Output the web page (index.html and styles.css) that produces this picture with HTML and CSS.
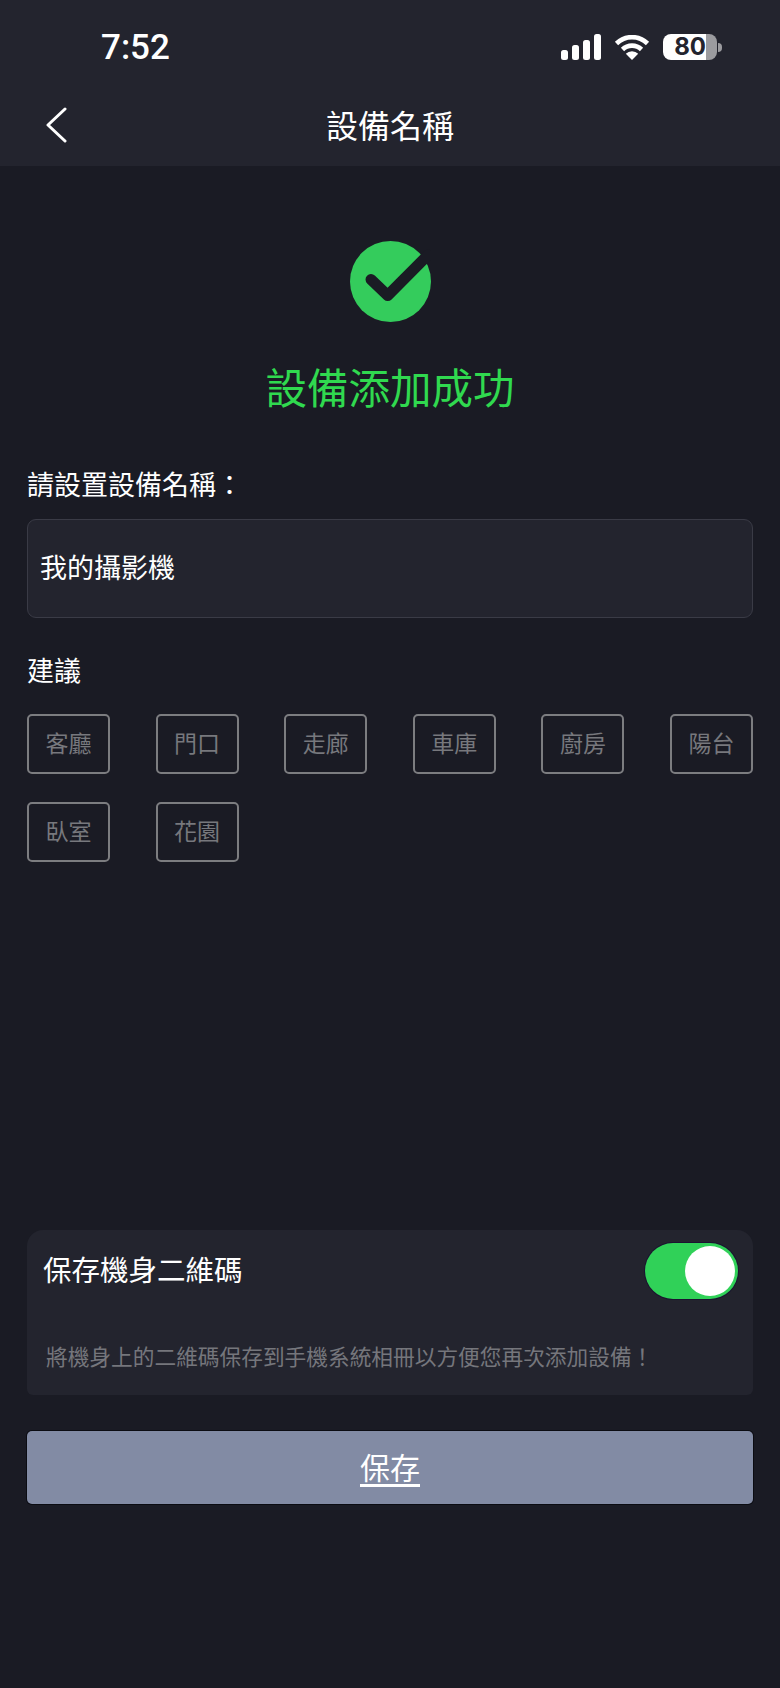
FILE: index.html
```html
<!DOCTYPE html>
<html>
<head>
    <meta charset="utf-8">
    <title>設備名稱</title>
    <link rel="stylesheet" href="styles.css">
</head>
<body>
<div class="page">
    <header class="top">
        <div class="status">
            <span class="time">7:52</span>
            <div class="status-icons">
                <svg class="signal" width="40" height="26" viewBox="0 0 40 26">
                    <rect x="0" y="16" width="7" height="10" rx="2.5"/>
                    <rect x="11" y="11" width="7" height="15" rx="2.5"/>
                    <rect x="22" y="6" width="7" height="20" rx="2.5"/>
                    <rect x="33" y="0" width="7" height="26" rx="2.5"/>
                </svg>
                <svg class="wifi" width="36" height="25" viewBox="0 0 36 25">
                    <path class="wifi-arc" d="M2.5 8.5A22 22 0 0 1 33.5 8.5"/>
                    <path class="wifi-arc" d="M8.5 14.5A13.5 13.5 0 0 1 27.5 14.5"/>
                    <path d="M18 25L11.8 18.8A8.8 8.8 0 0 1 24.2 18.8Z"/>
                </svg>
                <div class="battery">
                    <div class="battery-body">
                        <span class="battery-num">80</span>
                        <span class="battery-rest"></span>
                    </div>
                    <span class="battery-tip"></span>
                </div>
            </div>
        </div>
        <nav class="nav">
            <svg class="back" width="22" height="36" viewBox="0 0 22 36">
                <path d="M20 2L3 18L20 34"/>
            </svg>
            <h1 class="nav-title">設備名稱</h1>
        </nav>
    </header>

    <main class="content">
        <svg class="ok-icon" width="81" height="81" viewBox="0 0 81 81">
            <circle cx="40.5" cy="40.5" r="40.5" fill="#34cc5c"/>
            <path d="M21 38.5L37.7 54.5L78 14" fill="none" stroke="#1a1b24" stroke-width="11" stroke-linecap="round" stroke-linejoin="round"/>
        </svg>
        <h2 class="ok-title">設備添加成功</h2>

        <label class="label name-label">請設置設備名稱：</label>
        <div class="name-input">我的攝影機</div>

        <div class="label hint-label">建議</div>
        <div class="tags">
            <span class="tag">客廳</span>
            <span class="tag">門口</span>
            <span class="tag">走廊</span>
            <span class="tag">車庫</span>
            <span class="tag">廚房</span>
            <span class="tag">陽台</span>
            <span class="tag">臥室</span>
            <span class="tag">花園</span>
        </div>

        <section class="qr-card">
            <div class="qr-row">
                <span class="qr-title">保存機身二維碼</span>
                <div class="switch"><span class="thumb"></span></div>
            </div>
            <p class="qr-desc">將機身上的二維碼保存到手機系統相冊以方便您再次添加設備！</p>
        </section>

        <button class="save">保存</button>
    </main>
</div>
</body>
</html>
```

FILE: styles.css
```css
html, body {
    margin: 0;
    height: 100%;
}

body {
    background: #1a1b24;
    color: #fff;
    font-family: "Noto Sans CJK TC", "Noto Sans", sans-serif;
}

.page {
    display: flex;
    flex-direction: column;
    height: 1688px;
    overflow: hidden;
}

.top {
    background: #23242e;
    height: 166px;
}

.status {
    display: flex;
    justify-content: space-between;
    align-items: center;
    height: 34px;
    padding: 30px 58px 0 101px;
}

.time {
    padding-top: 2px;
    font-family: Roboto, sans-serif;
    font-size: 35px;
    font-weight: 500;
    line-height: 34px;
}

.status-icons {
    display: flex;
    align-items: center;
}

.signal {
    fill: #fff;
    margin-right: 13px;
}

.wifi {
    fill: #fff;
    margin-right: 13px;
}

.wifi-arc {
    fill: none;
    stroke: #fff;
    stroke-width: 4.6;
}

.battery {
    display: flex;
    align-items: center;
}

.battery-body {
    display: flex;
    width: 54px;
    height: 26px;
}

.battery-num {
    flex: 1;
    background: #fff;
    border-radius: 8px 0 0 8px;
    color: #23242e;
    font-family: Inter, sans-serif;
    font-size: 24px;
    font-weight: 700;
    line-height: 26px;
    text-align: right;
}

.battery-rest {
    width: 11px;
    background: #9b9b9f;
    border-radius: 0 8px 8px 0;
}

.battery-tip {
    width: 4px;
    height: 9px;
    margin-left: 1px;
    border-radius: 0 4px 4px 0;
    background: #9b9b9f;
}

.nav {
    position: relative;
    display: flex;
    justify-content: center;
    align-items: center;
    height: 82px;
    margin-top: 20px;
}

.back {
    position: absolute;
    left: 45px;
    top: 23px;
}

.back path {
    fill: none;
    stroke: #fff;
    stroke-width: 3;
    stroke-linecap: round;
    stroke-linejoin: round;
}

.nav-title {
    margin: 0;
    padding-bottom: 3px;
    font-size: 32px;
    font-weight: 400;
    line-height: 40px;
}

.content {
    flex: 1;
    display: flex;
    flex-direction: column;
    padding: 0 27px 184px;
}

.ok-icon {
    align-self: center;
    margin-top: 75px;
}

.ok-title {
    margin: 39px 0 0;
    color: #30d94f;
    font-size: 41.5px;
    font-weight: 400;
    line-height: 50px;
    text-align: center;
}

.label {
    font-size: 27px;
    line-height: 34px;
}

.name-label {
    margin-top: 56px;
}

.name-input {
    box-sizing: border-box;
    height: 99px;
    margin-top: 18px;
    padding-left: 12px;
    background: #23242e;
    border: 1px solid #3a3b46;
    border-radius: 9px;
    font-size: 27px;
    line-height: 93px;
}

.hint-label {
    margin-top: 35px;
}

.tags {
    display: grid;
    grid-template-columns: repeat(6, 83px);
    justify-content: space-between;
    row-gap: 28px;
    margin-top: 27px;
}

.tag {
    box-sizing: border-box;
    height: 60px;
    border: 2px solid #7c7d80;
    border-radius: 5px;
    color: #77787d;
    font-size: 23px;
    line-height: 52px;
    text-align: center;
}

.qr-card {
    margin-top: auto;
    padding: 13px 15px 24px 16px;
    background: #23242e;
    border-radius: 16px 16px 6px 6px;
}

.qr-row {
    display: flex;
    justify-content: space-between;
    align-items: center;
}

.qr-title {
    padding-bottom: 4px;
    font-size: 28.5px;
    line-height: 40px;
}

.switch {
    display: flex;
    justify-content: flex-end;
    align-items: center;
    box-sizing: border-box;
    width: 93px;
    height: 56px;
    padding-right: 3px;
    background: #30d158;
    border-radius: 28px;
    box-shadow: 0 0 0 1px #1b1330;
}

.thumb {
    width: 50px;
    height: 50px;
    border-radius: 50%;
    background: #fff;
}

.qr-desc {
    margin: 42px 0 0;
    padding-left: 3px;
    color: #75767c;
    font-size: 21.7px;
    line-height: 30px;
    white-space: nowrap;
}

.save {
    height: 73px;
    margin-top: 36px;
    padding: 0 0 4px;
    background: #828ba4;
    border: 0;
    border-radius: 5px;
    box-shadow: 0 0 0 1px #0b0c12;
    color: #fff;
    font-family: inherit;
    font-size: 30px;
    text-decoration: underline;
    text-underline-offset: 5px;
}
```
